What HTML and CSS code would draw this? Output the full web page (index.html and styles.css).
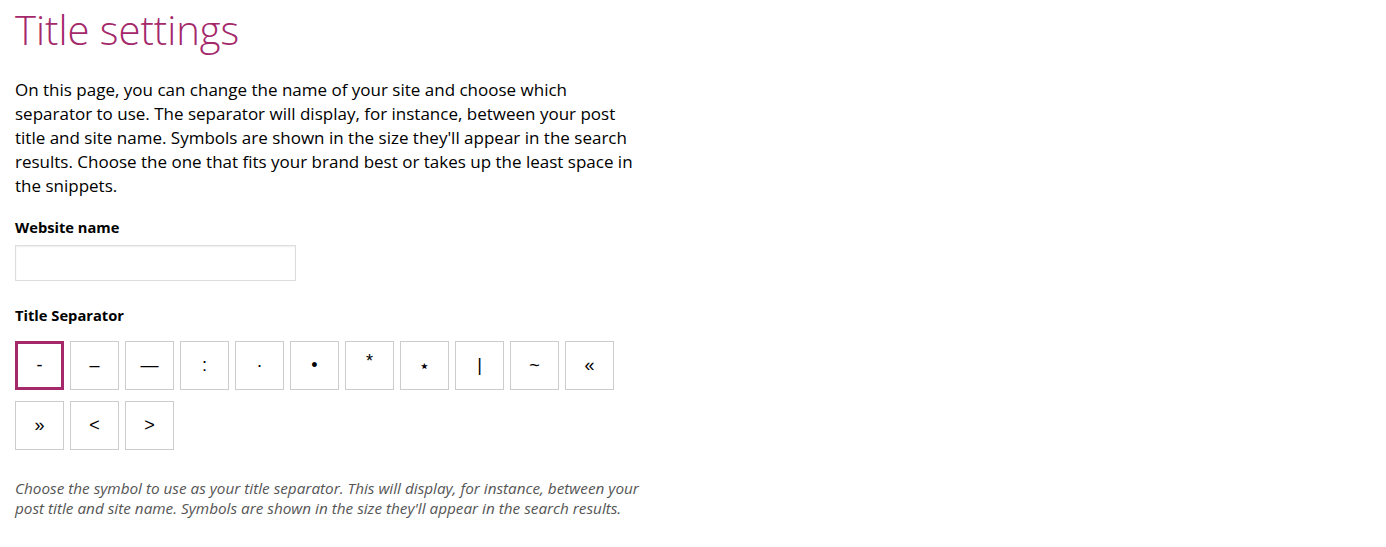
FILE: index.html
```html
<!DOCTYPE html>
<html lang="en">
<head>
    <meta charset="UTF-8">
    <title>Title settings</title>
    <link rel="stylesheet" href="styles.css">
</head>
<body>
    <div id="wrap">
        <h1 class="page-title">Title settings</h1>
        <p class="intro">On this page, you can change the name of your site and choose which separator to use. The separator will display, for instance, between your post title and site name. Symbols are shown in the size they'll appear in the search results. Choose the one that fits your brand best or takes up the least space in the snippets.</p>

        <!--網站名稱-->
        <label class="field-label" for="website-name">Website name</label>
        <input id="website-name" class="text-input" type="text">

        <!--分隔符號-->
        <div class="field-label sep-label">Title Separator</div>
        <div id="separators">
            <button class="sep selected">-</button>
            <button class="sep">&ndash;</button>
            <button class="sep">&mdash;</button>
            <button class="sep">:</button>
            <button class="sep">&middot;</button>
            <button class="sep">&bull;</button>
            <button class="sep raised">*</button>
            <button class="sep">&#8902;</button>
            <button class="sep">|</button>
            <button class="sep">~</button>
            <button class="sep">&laquo;</button>
            <button class="sep">&raquo;</button>
            <button class="sep">&lt;</button>
            <button class="sep">&gt;</button>
        </div>
        <p class="description">Choose the symbol to use as your title separator. This will display, for instance, between your post title and site name. Symbols are shown in the size they'll appear in the search results.</p>
    </div>
</body>
</html>
```

FILE: styles.css
```css
*{
    margin: 0;
    padding: 0;
    box-sizing: border-box;
}
body{
    font-family: "Open Sans", "Noto Sans", sans-serif;
    font-size: 15px;
    color: #1e1e1e;
    background: #fff;
}
#wrap{
    width: 643px;
    padding: 0 0 0 15px;
}
.page-title{
    font-size: 40px;
    font-weight: 300;
    line-height: 56px;
    color: #a4286a;
    margin-top: 2px;
}
.intro{
    margin-top: 20px;
    font-size: 17px;
    line-height: 24px;
    color: #000;
}
.field-label{
    display: block;
    margin-top: 19px;
    font-weight: 700;
    font-size: 14.7px;
    line-height: 20px;
    color: #000;
}
.sep-label{
    margin-top: 24px;
}
.text-input{
    display: block;
    width: 281px;
    height: 36px;
    margin-top: 8px;
    border: 1px solid #ddd;
    box-shadow: inset 0 1px 2px rgba(0,0,0,.07);
    font-size: 14px;
    padding: 0 8px;
}
#separators{
    display: flex;
    flex-wrap: wrap;
    gap: 11px 6px;
    margin-top: 16px;
}
.sep{
    width: 49px;
    height: 49px;
    border: 1px solid #ccc;
    background: #fff;
    font-family: "Liberation Sans", "DejaVu Sans", sans-serif;
    font-size: 18px;
    color: #000;
}
.sep.selected{
    border: 3px solid #a4286a;
}
.sep.raised{
    padding-bottom: 8px;
}
.description{
    margin-top: 28px;
    font-size: 15.3px;
    line-height: 20px;
    font-style: italic;
    color: #555;
}
```
